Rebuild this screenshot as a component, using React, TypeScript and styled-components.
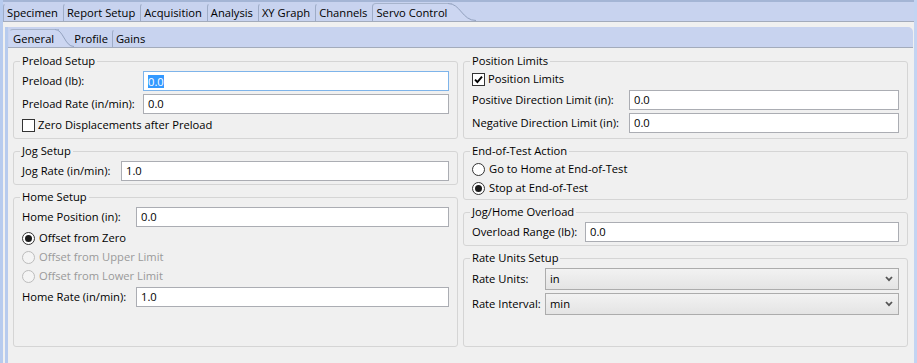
import React from 'react';
import styled, { createGlobalStyle } from 'styled-components';

const GlobalStyle = createGlobalStyle`
  html, body {
    margin: 0;
    padding: 0;
    background: #f0f0f0;
  }
  body {
    font-family: 'Open Sans', 'Noto Sans', sans-serif;
    font-size: 11.2px;
    line-height: 16px;
    color: #000;
  }
`;

const BAR = '#c8d3ef';
const STRIPE = '#b7cbee';

const Window = styled.div`
  width: 917px;
  height: 363px;
  box-sizing: border-box;
  display: flex;
  flex-direction: column;
  overflow: hidden;
  background: #f0f0f0;
  border-left: 3px solid ${STRIPE};
  border-right: 3px solid #c3d4f2;
`;

const TabBar = styled.div<{ $top?: boolean }>`
  flex: none;
  height: ${(p) => (p.$top ? '19px' : '20px')};
  display: flex;
  align-items: flex-end;
  background: ${BAR};
  border-top: ${(p) => (p.$top ? '2px solid #a4b5d5' : 'none')};
  border-bottom: 1px solid #a3abbb;
  border-top-right-radius: ${(p) => (p.$top ? '0' : '5px')};
  padding-left: ${(p) => (p.$top ? '0' : '1px')};
`;

const Tab = styled.div<{ $active?: boolean; $noEdge?: boolean; $padRight?: number }>`
  height: 18px;
  box-sizing: border-box;
  display: flex;
  align-items: center;
  padding: 0 ${(p) => p.$padRight ?? 5}px 0 3px;
  white-space: nowrap;
  border-left: 1px solid ${(p) => (p.$noEdge ? 'transparent' : '#9eacc7')};
  border-top: 1px solid ${(p) => (p.$active ? '#a7b4cc' : BAR)};
  border-top-left-radius: 4px;
  background: ${(p) => (p.$active ? '#ccd6f1' : 'transparent')};
`;

const SwooshSvg = styled.svg<{ $overlap: number }>`
  flex: none;
  display: block;
  align-self: flex-end;
  margin-left: -4px;
  margin-right: -${(p) => p.$overlap}px;
`;

// curved right edge of the selected tab
const Swoosh: React.FC<{ width: number; overlap?: number }> = ({ width, overlap = 0 }) => (
  <SwooshSvg $overlap={overlap} width={width} height={18} viewBox={`0 0 ${width} 18`}>
    <path d={`M0 0 C${width * 0.45} 0 ${width * 0.5} 18 ${width} 18 L0 18 Z`} fill="#ccd6f1" />
    <path
      d={`M0 0.5 C${width * 0.45} 0.5 ${width * 0.5} 17.5 ${width} 17.5`}
      fill="none"
      stroke="#93a2bf"
      strokeWidth={1}
    />
  </SwooshSvg>
);

const Body = styled.div`
  flex: 1;
  display: flex;
  flex-direction: column;
  padding-top: 5px;
  min-height: 0;
`;

const InnerPanel = styled.div`
  flex: 1;
  display: flex;
  flex-direction: column;
  margin-left: 2px;
  margin-right: 1px;
  border-left: 3px solid ${STRIPE};
  min-height: 0;
`;

const Content = styled.div`
  flex: 1;
  display: grid;
  grid-template-columns: 1fr 1fr;
  column-gap: 5px;
  padding: 5px 5px 16px 5px;
  min-height: 0;
`;

const Column = styled.div`
  display: flex;
  flex-direction: column;
  gap: 4px;
  min-height: 0;
`;

const GroupBox = styled.fieldset<{ $grow?: boolean; $padBottom?: number }>`
  margin: 0;
  min-width: 0;
  border: 1px solid #d5d5d5;
  border-radius: 3px;
  padding: 2px 8px ${(p) => p.$padBottom ?? 3}px 8px;
  flex: ${(p) => (p.$grow ? '1' : 'none')};
`;

const GroupTitle = styled.legend`
  padding: 0 2px;
  margin-left: -2px;
  line-height: 16px;
`;

const FieldGrid = styled.div<{ $labelWidth: number }>`
  display: grid;
  grid-template-columns: ${(p) => p.$labelWidth}px 1fr;
  row-gap: 3px;
  align-items: center;
`;

const Label = styled.span`
  white-space: nowrap;
`;

const TextBox = styled.div<{ $focused?: boolean }>`
  height: 20px;
  box-sizing: border-box;
  display: flex;
  align-items: center;
  padding: 0 4px;
  background: #fff;
  border: 1px solid ${(p) => (p.$focused ? '#7eb4ea' : '#abadb3')};
`;

const Selected = styled.span`
  background: #3399ff;
  color: #fff;
  line-height: 13px;
`;

const Select = styled.div`
  height: 22px;
  box-sizing: border-box;
  display: flex;
  align-items: center;
  justify-content: space-between;
  padding: 0 5px 0 4px;
  border: 1px solid #acacac;
  background: linear-gradient(#f2f2f2, #e4e4e4);
`;

const OptionRow = styled.div<{ $gap: number; $disabled?: boolean }>`
  grid-column: 1 / -1;
  height: 16px;
  display: flex;
  align-items: center;
  gap: ${(p) => p.$gap}px;
  color: ${(p) => (p.$disabled ? '#9a9a9a' : '#000')};
`;

const CheckBoxBox = styled.span`
  width: 13px;
  height: 13px;
  box-sizing: border-box;
  flex: none;
  display: flex;
  align-items: center;
  justify-content: center;
  border: 1px solid #333;
  background: #fff;
`;

const RadioCircle = styled.span<{ $disabled?: boolean }>`
  width: 13px;
  height: 13px;
  box-sizing: border-box;
  flex: none;
  display: flex;
  align-items: center;
  justify-content: center;
  border-radius: 50%;
  border: 1px solid ${(p) => (p.$disabled ? '#bcbcbc' : '#333')};
  background: ${(p) => (p.$disabled ? '#f4f4f4' : '#fff')};
`;

const RadioDot = styled.span`
  width: 7px;
  height: 7px;
  border-radius: 50%;
  background: #1a1a1a;
`;

const Chevron = () => (
  <svg width={8} height={6} viewBox="0 0 8 6">
    <path d="M1 1 L4 4.2 L7 1" fill="none" stroke="#555" strokeWidth={1.8} />
  </svg>
);

const CheckMark = () => (
  <svg width={9} height={9} viewBox="0 0 9 9">
    <path d="M1 4.6 L3.4 7 L8 1.6" fill="none" stroke="#000" strokeWidth={1.9} />
  </svg>
);

const Check: React.FC<{ label: string; checked?: boolean }> = ({ label, checked }) => (
  <OptionRow $gap={3}>
    <CheckBoxBox>{checked && <CheckMark />}</CheckBoxBox>
    <span>{label}</span>
  </OptionRow>
);

const Radio: React.FC<{ label: string; checked?: boolean; disabled?: boolean }> = ({
  label,
  checked,
  disabled,
}) => (
  <OptionRow $gap={4} $disabled={disabled}>
    <RadioCircle $disabled={disabled}>{checked && <RadioDot />}</RadioCircle>
    <span>{label}</span>
  </OptionRow>
);

const Field: React.FC<{ label: string; value: string }> = ({ label, value }) => (
  <>
    <Label>{label}</Label>
    <TextBox>{value}</TextBox>
  </>
);

const Combo: React.FC<{ label: string; value: string }> = ({ label, value }) => (
  <>
    <Label>{label}</Label>
    <Select>
      <span>{value}</span>
      <Chevron />
    </Select>
  </>
);

const topTabs = ['Specimen', 'Report Setup', 'Acquisition', 'Analysis', 'XY Graph', 'Channels'];

const App: React.FC = () => {
  return (
    <>
      <GlobalStyle />
      <Window>
        <TabBar $top>
          {topTabs.map((t) => (
            <Tab key={t}>{t}</Tab>
          ))}
          <Tab $active>Servo Control</Tab>
          <Swoosh width={28} />
        </TabBar>
        <Body>
          <InnerPanel>
            <TabBar>
              <Tab $active $noEdge $padRight={5}>
                General
              </Tab>
              <Swoosh width={19} overlap={4} />
              <Tab $noEdge $padRight={4}>
                Profile
              </Tab>
              <Tab $padRight={4}>Gains</Tab>
            </TabBar>
            <Content>
              <Column>
                <GroupBox $padBottom={5}>
                  <GroupTitle>Preload Setup</GroupTitle>
                  <FieldGrid $labelWidth={121}>
                    <Label>Preload (lb):</Label>
                    <TextBox $focused>
                      <Selected>0.0</Selected>
                    </TextBox>
                    <Field label="Preload Rate (in/min):" value="0.0" />
                    <Check label="Zero Displacements after Preload" />
                  </FieldGrid>
                </GroupBox>
                <GroupBox>
                  <GroupTitle>Jog Setup</GroupTitle>
                  <FieldGrid $labelWidth={99}>
                    <Field label="Jog Rate (in/min):" value="1.0" />
                  </FieldGrid>
                </GroupBox>
                <GroupBox $grow>
                  <GroupTitle>Home Setup</GroupTitle>
                  <FieldGrid $labelWidth={114}>
                    <Field label="Home Position (in):" value="0.0" />
                    <Radio label="Offset from Zero" checked />
                    <Radio label="Offset from Upper Limit" disabled />
                    <Radio label="Offset from Lower Limit" disabled />
                    <Field label="Home Rate (in/min):" value="1.0" />
                  </FieldGrid>
                </GroupBox>
              </Column>
              <Column>
                <GroupBox $padBottom={5}>
                  <GroupTitle>Position Limits</GroupTitle>
                  <FieldGrid $labelWidth={157}>
                    <Check label="Position Limits" checked />
                    <Field label="Positive Direction Limit (in):" value="0.0" />
                    <Field label="Negative Direction Limit (in):" value="0.0" />
                  </FieldGrid>
                </GroupBox>
                <GroupBox>
                  <GroupTitle>End-of-Test Action</GroupTitle>
                  <FieldGrid $labelWidth={157}>
                    <Radio label="Go to Home at End-of-Test" />
                    <Radio label="Stop at End-of-Test" checked />
                  </FieldGrid>
                </GroupBox>
                <GroupBox>
                  <GroupTitle>Jog/Home Overload</GroupTitle>
                  <FieldGrid $labelWidth={113}>
                    <Field label="Overload Range (lb):" value="0.0" />
                  </FieldGrid>
                </GroupBox>
                <GroupBox $grow>
                  <GroupTitle>Rate Units Setup</GroupTitle>
                  <FieldGrid $labelWidth={73}>
                    <Combo label="Rate Units:" value="in" />
                    <Combo label="Rate Interval:" value="min" />
                  </FieldGrid>
                </GroupBox>
              </Column>
            </Content>
          </InnerPanel>
        </Body>
      </Window>
    </>
  );
};

export default App;
